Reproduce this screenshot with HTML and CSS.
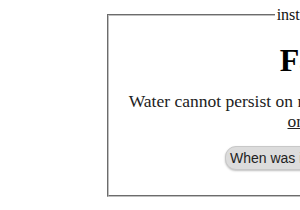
FILE: index.html
```html
<!DOCTYPE html>
<html>
<head>
<meta charset="utf-8">
<link rel="stylesheet" href="styles.css">
</head>
<body>
<fieldset class="panel">
  <legend class="panel-title">instructions</legend>
  <h1 class="fact-title">Fact.</h1>
  <p class="fact-text">Water cannot persist on mars's surface as a liquid too<br><a class="fact-link" href="#">on wiki</a></p>
  <button class="ask-btn">When was it rediscovered?</button>
</fieldset>
</body>
</html>
```
FILE: styles.css
```css
html, body {
  margin: 0;
  padding: 0;
  background: #ffffff;
  overflow: hidden;
}
body {
  font-family: "Liberation Serif", "Times New Roman", serif;
  color: #111;
  width: 300px;
  height: 210px;
}
.panel {
  box-sizing: border-box;
  width: 414px;
  margin: 6px 0 0 107px;
  padding: 0 12px;
  height: 191px;
  border: 2px groove #c0c0c0;
  text-align: center;
}
.panel-title {
  margin: 0 auto;
  padding: 0 2px;
  font-size: 16px;
  color: #111;
}
.fact-title {
  margin: 18px 0 0;
  font-size: 32px;
  font-weight: bold;
  line-height: 37px;
  color: #000;
}
.fact-text {
  margin: 12px 0 0;
  font-size: 17.5px;
  line-height: 20px;
  color: #222;
  white-space: nowrap;
}
.fact-link {
  color: #222;
  text-decoration: underline;
}
.ask-btn {
  margin-top: 15px;
  font-family: "Liberation Sans", Arial, sans-serif;
  font-size: 14px;
  color: #222;
  background: #dcdcdc;
  border: 1px solid #c8c8c8;
  border-radius: 11px;
  padding: 3px 4px;
  box-shadow: 0 1px 2px rgba(0,0,0,0.25);
}
```
